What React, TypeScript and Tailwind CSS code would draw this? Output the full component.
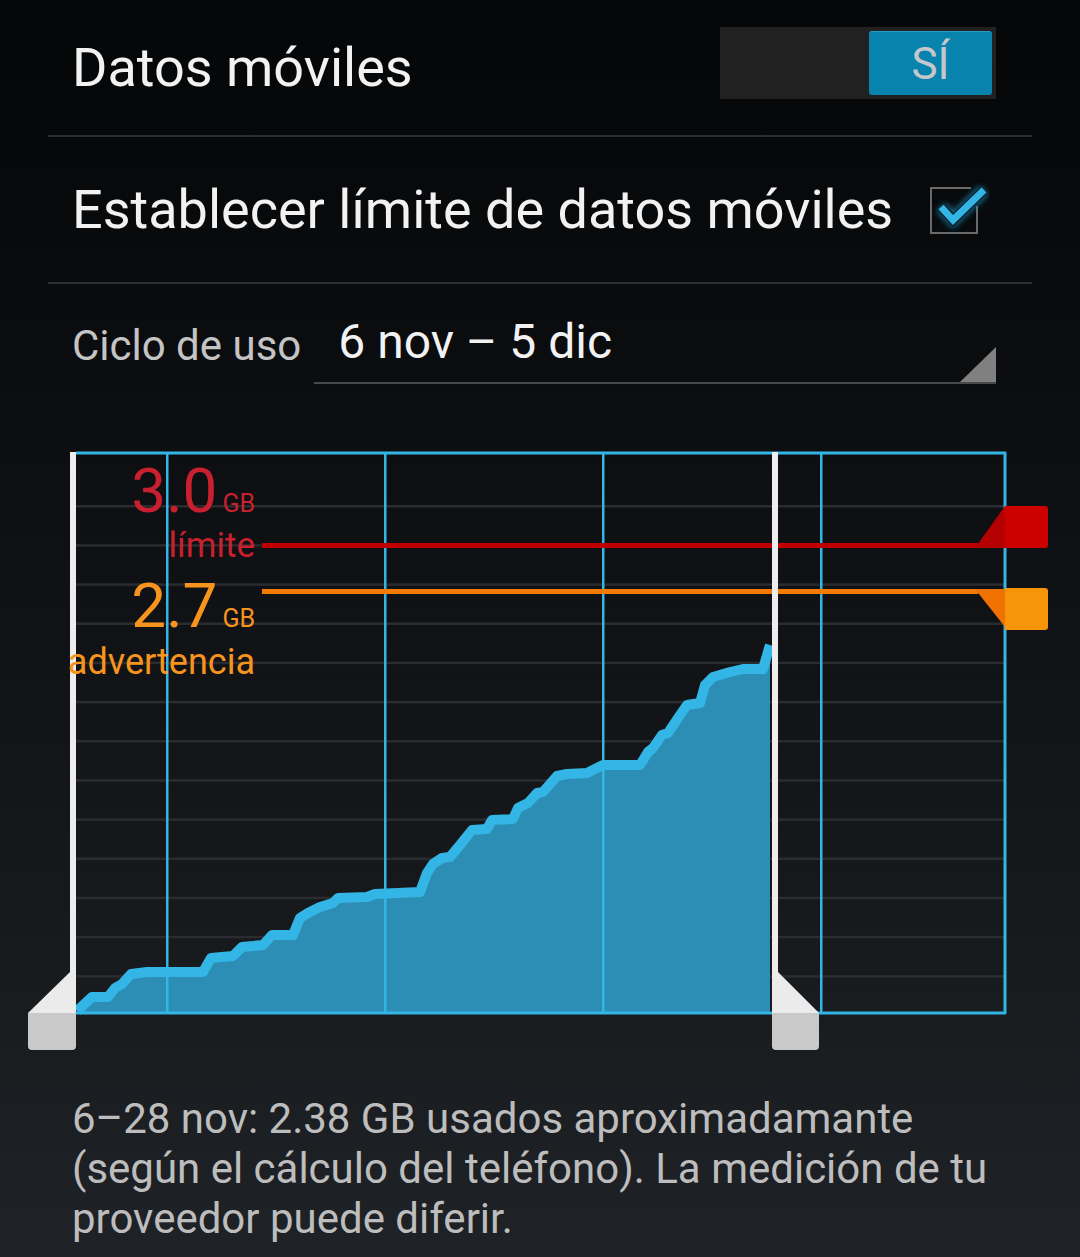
import React from "react";

// usage curve, traced in page coordinates (chart svg uses a matching viewBox)
const USAGE: [number, number][] = [
  [77, 1011], [92, 997], [108, 997], [115, 988], [122, 984], [131, 974], [147, 972],
  [203, 972], [211, 958], [233, 956], [242, 947], [263, 945], [272, 935], [293, 935],
  [300, 918], [308, 913], [320, 907], [333, 903], [338, 898], [367, 897], [375, 894],
  [420, 892], [427, 873], [433, 864], [442, 858], [450, 857], [460, 845], [472, 830],
  [487, 829], [492, 820], [513, 819], [518, 808], [528, 803], [537, 793], [543, 792],
  [557, 776], [567, 774], [587, 773], [603, 765], [640, 765], [648, 752], [653, 748],
  [662, 735], [668, 733], [680, 715], [687, 705], [700, 703], [705, 685], [713, 677],
  [730, 672], [743, 669], [763, 669], [770, 645],
];

const GRID = Array.from({ length: 13 }, (_, i) => 506 + i * 39.17);
const DIVIDERS = [166, 384, 602, 820];

function Toggle() {
  return (
    <div className="mb-[9px] flex h-[72px] w-[276px] items-center justify-end bg-[#212121] pr-[4px]">
      <div className="flex h-[64px] w-[123px] items-center justify-center rounded-[3px] border-t border-[#2a9ac4] bg-[#0883ae] text-[44px] leading-none text-[#c4c8ca]">
        SÍ
      </div>
    </div>
  );
}

function Checkbox() {
  return (
    <svg width="64" height="56" viewBox="926 180 64 56">
      <defs>
        <filter id="glow" x="-50%" y="-50%" width="200%" height="200%">
          <feGaussianBlur stdDeviation="3" />
        </filter>
      </defs>
      <path d="M971 186 H931 V231 H977 V204" fill="none" stroke="#6a6a6a" strokeWidth="2" />
      <polyline points="941,205 953,218 984,188" fill="none" stroke="#1a8fc0" strokeWidth="12" filter="url(#glow)" opacity="0.8" />
      <polyline points="941,205 953,218 984,188" fill="none" stroke="#0a2633" strokeWidth="10" />
      <polyline points="941,205 953,218 984,188" fill="none" stroke="#33b5e5" strokeWidth="7" />
    </svg>
  );
}

function UsageChart() {
  const line = USAGE.map((p) => p.join(",")).join(" ");
  const area = `77,1013 ${line} 770,1013`;
  return (
    <svg width="1080" height="620" viewBox="0 440 1080 620" className="block">
      {GRID.map((y) => (
        <rect key={y} x="76" y={y - 1} width="929" height="2.5" fill="#2a2c2f" />
      ))}
      <polygon points={area} fill="#2d8eb5" />
      <polyline points={line} fill="none" stroke="#33b5e5" strokeWidth="10" strokeLinejoin="round" />

      {/* frame */}
      <rect x="76" y="451.5" width="930" height="3" fill="#33b5e5" />
      <rect x="76" y="1011.5" width="930" height="3" fill="#33b5e5" />
      {DIVIDERS.map((x) => (
        <rect key={x} x={x} y="452" width="2.5" height="561" fill="#33b5e5" />
      ))}
      <rect x="1003.5" y="452" width="3" height="562" fill="#33b5e5" />

      {/* limit */}
      <rect x="262" y="543" width="716" height="5" fill="#c00000" />
      <polygon points="975,548 1005,506 1005,548" fill="#b40000" />
      <path d="M1005 506 H1045 Q1048 506 1048 509 V545 Q1048 548 1045 548 H1005 Z" fill="#cd0000" />

      {/* warning */}
      <rect x="262" y="589" width="716" height="5" fill="#f57b00" />
      <polygon points="975,589 1005,589 1005,627" fill="#ef7100" />
      <path d="M1005 588 H1045 Q1048 588 1048 591 V627 Q1048 630 1045 630 H1005 Z" fill="#f7950a" />

      {/* range handles */}
      <rect x="70" y="452" width="6" height="562" fill="#ededed" />
      <polygon points="70,972 76,972 76,1013 28,1013" fill="#ebebeb" />
      <path d="M28 1013 H76 V1046 Q76 1050 72 1050 H32 Q28 1050 28 1046 Z" fill="#c9c9c9" />
      <rect x="772" y="452" width="6" height="562" fill="#ededed" />
      <polygon points="772,971 777,971 819,1013 772,1013" fill="#ebebeb" />
      <path d="M772 1013 H819 V1046 Q819 1050 815 1050 H776 Q772 1050 772 1046 Z" fill="#c9c9c9" />

      {/* labels */}
      <g fontFamily="Roboto, sans-serif" textAnchor="end">
        <text x="255" y="512" fill="#c9202f">
          <tspan fontSize="62">3.0</tspan>
          <tspan fontSize="25" dx="5">GB</tspan>
        </text>
        <text x="255" y="557" fill="#c9202f" fontSize="35">límite</text>
        <text x="255" y="627" fill="#f7941d">
          <tspan fontSize="62">2.7</tspan>
          <tspan fontSize="25" dx="5">GB</tspan>
        </text>
        <text x="255" y="674" fill="#f7941d" fontSize="36">advertencia</text>
      </g>
    </svg>
  );
}

export default function App() {
  return (
    <div className="min-h-[1257px] w-[1080px] bg-linear-to-b from-[#050607] via-[#101215] to-[#1f2226] font-['Roboto',sans-serif]">
      <div className="mx-[48px]">
        <div className="flex h-[135px] items-center justify-between pl-[24px] pr-[36px]">
          <span className="text-[54px] leading-none text-[#f2f2f2]">Datos móviles</span>
          <Toggle />
        </div>
        <div className="h-[2px] bg-[#2a2c2f]" />
        <div className="flex h-[145px] items-center justify-between pl-[24px] pr-[42px]">
          <span className="text-[54px] leading-none text-[#f2f2f2]">Establecer límite de datos móviles</span>
          <Checkbox />
        </div>
        <div className="h-[2px] bg-[#2a2c2f]" />
      </div>

      <div className="flex h-[100px] items-end pl-[72px] pr-[84px]">
        <span className="mb-[17px] text-[42px] leading-none text-[#c4c4c4]">Ciclo de uso</span>
        <div className="ml-[13px] flex h-[76px] flex-1 items-end justify-between border-b-2 border-[#48494c]">
          <span className="mb-[16px] pl-[24px] text-[48px] leading-none text-[#f2f2f2]">6 nov – 5 dic</span>
          <svg width="36" height="35" viewBox="0 0 36 35" className="block">
            <polygon points="0,35 36,0 36,35" fill="#808080" />
          </svg>
        </div>
      </div>

      <div className="mt-[56px]">
        <UsageChart />
      </div>

      <p className="pl-[72px] pt-[34px] text-[42px] leading-[50px] text-[#bdbdbd]">
        6–28 nov: 2.38 GB usados aproximadamante
        <br />
        (según el cálculo del teléfono). La medición de tu
        <br />
        proveedor puede diferir.
      </p>
    </div>
  );
}
